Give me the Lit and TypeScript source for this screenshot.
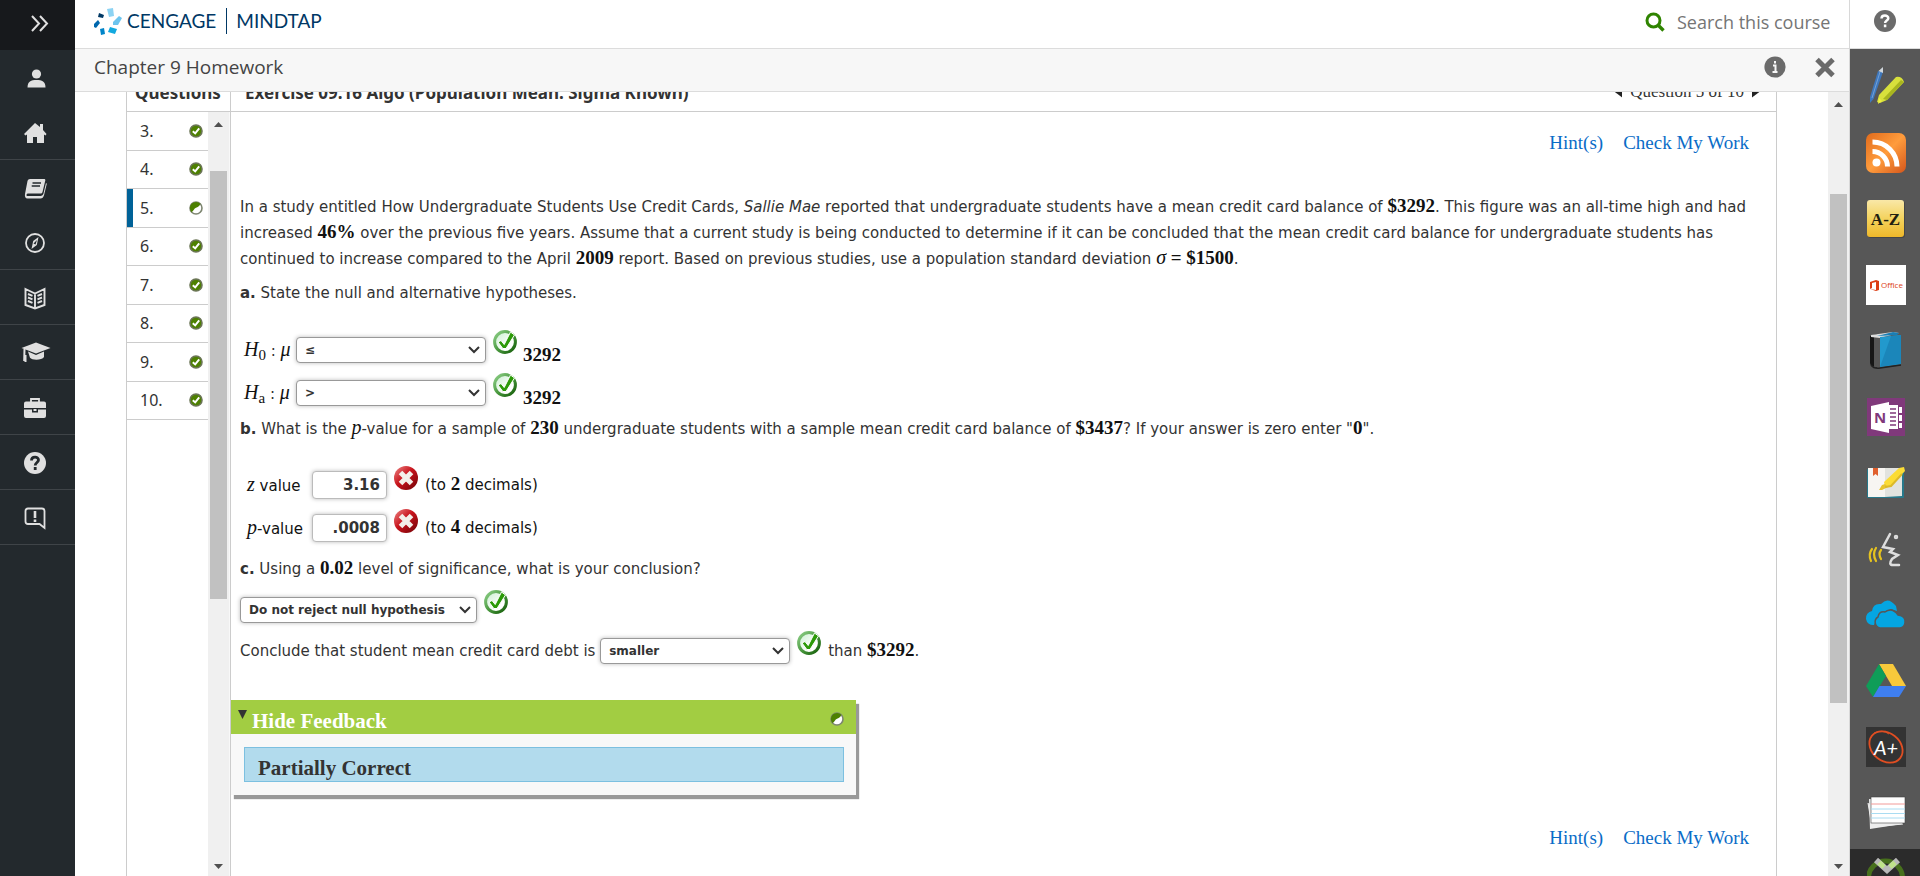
import { LitElement, html, css, svg, TemplateResult } from "lit";
import { customElement, property } from "lit/decorators.js";
import { classMap } from "lit/directives/class-map.js";

type Status = "full" | "partial";

const statusDot = (status: Status) => html`
  <svg class="dot" viewBox="0 0 14 14" role="img" aria-label=${status === "full" ? "Correct" : "Partially correct"}>
    <circle cx="7" cy="7" r="6" fill=${status === "full" ? "#4d8000" : "#fff"} stroke=${status === "full" ? "#6b7556" : "#7d8570"} stroke-width="1.6" />
    ${status === "full"
      ? svg`<path d="M3.800 7.200 6.200 9.400 10.200 4.400" fill="none" stroke="#fff" stroke-width="2" />`
      : svg`<path d="M2.600 11.200A6 6 0 0 1 11.400 2.800C10.400 5.600 8.600 6.200 7 6.800 5 7.600 4.800 9.600 2.600 11.200Z" fill="#4d8000" />`}
  </svg>
`;

const okMark = html`
  <svg class="mark" viewBox="0 0 24 24" role="img" aria-label="Correct">
    <defs>
      <linearGradient id="ring" x1="0" y1="0" x2="1" y2="1"><stop offset="0" stop-color="#8fd08a" /><stop offset="0.500" stop-color="#4b9a40" /><stop offset="1" stop-color="#145c08" /></linearGradient>
      <linearGradient id="disc" x1="0" y1="0" x2="1" y2="1"><stop offset="0" stop-color="#c9efcf" /><stop offset="0.700" stop-color="#fff" /></linearGradient>
    </defs>
    <circle cx="12" cy="12" r="10.400" fill="url(#disc)" stroke="url(#ring)" stroke-width="3" />
    <path d="M5 12 8 10.500 11.200 14.500 17.500 2 21.500 5 13 18.500 9.800 18.500Z" fill="#2c9a08" stroke="#fff" stroke-width="1" />
  </svg>
`;

const badMark = html`
  <svg class="mark" viewBox="0 0 24 24" role="img" aria-label="Incorrect">
    <defs>
      <linearGradient id="red" x1="0" y1="0" x2="1" y2="1"><stop offset="0" stop-color="#e88" /><stop offset="0.450" stop-color="#c8141c" /><stop offset="1" stop-color="#6e0206" /></linearGradient>
    </defs>
    <circle cx="12" cy="12" r="12" fill="url(#red)" />
    <path d="M6.500 6.500 17.500 17.500M17.500 6.500 6.500 17.500" stroke="#f3f0ea" stroke-width="5" stroke-linecap="butt" />
  </svg>
`;

const navIcons: Record<string, TemplateResult> = {
  profile: svg`<circle cx="12.500" cy="7" r="4.600" /><path d="M3.500 20.500c0-6 3.500-7.500 9-7.500s9 1.500 9 7.500z" />`,
  home: svg`<path d="M11 2 0 13l1.500 1.500L3 13.500V22h6v-6h4v6h7v-8.500l1.500 1 1-1.500L19 9V3h-3v3z" />`,
  book: svg`<path d="M6 2h14c1 0 1.500.500 1.300 1.500L18.500 15c-.300 1-1 1.500-2 1.500H4c-1.500 0-2 2-1 2.500h13.500c1.500 0 2.500-1 3-2.500L22 6l.800.800-2.800 11.400c-.500 2-1.800 3.300-3.500 3.300H3.500C1.500 21.500.500 19.500 1 17L3.500 4C3.800 2.700 4.800 2 6 2z" /><path d="M8.500 6H17M7.700 9H16" stroke="#23292d" stroke-width="1.500" />`,
  compass: svg`<circle cx="11" cy="12" r="9" fill="none" stroke="#e0e0e0" stroke-width="1.800" /><path d="M14.500 6 12.800 14 7.500 18 9.200 10z" /><path d="M13 9 9.500 12.500 11.500 13.500z" fill="#23292d" />`,
  reader: svg`<path d="M1.500 3 11 7.500 20.500 3v16L11 22.500 1.500 19zM11 7.500v15M4 8l4.500 1.800M4 11.500l4.500 1.800M4 15l4.500 1.800M18 8l-4.500 1.800M18 11.500l-4.500 1.800M18 15l-4.500 1.800" fill="none" stroke="#e0e0e0" stroke-width="1.900" />`,
  grades: svg`<path d="M12 1.500 26.500 7 12 12.500-2.500 7z" /><path d="M4 10.500 12 14l8-3.500v5.500c-2 3.500-12 3.500-14 .800z" /><path d="M.5 8 .2 20M1.500 14v7" stroke="#e0e0e0" stroke-width="2" />`,
  tools: svg`<path d="M8 6V3h8v3" fill="none" stroke="#e0e0e0" stroke-width="1.800" transform="translate(-1 0)" /><path d="M2 5.500h18q2 0 2 2V12H0V7.500q0-2 2-2zM0 13.500h8v3h6v-3h8V20q0 2-2 2H2q-2 0-2-2z" /><path d="M9.500 13h3v2h-3z" />`,
  help: svg`<circle cx="11" cy="12" r="11" /><path d="M7.500 9.500C7.500 5 14.500 5 14.500 9c0 2.500-3.300 2.500-3.300 5.500M11.200 16v3" fill="none" stroke="#23292d" stroke-width="2.800" />`,
  feedback: svg`<path d="M4 2.500h14q2.500 0 2.500 2.500v17l-5-4H4q-2.500 0-2.500-2.500V5Q1.500 2.500 4 2.500z" fill="none" stroke="#e0e0e0" stroke-width="1.800" /><path d="M11 5v7M11 13.500v2.500" stroke="#e0e0e0" stroke-width="2.600" />`,
};

@customElement("side-nav")
export class SideNav extends LitElement {
  static styles = css`
    :host { display: flex; flex-direction: column; width: 75px; flex: none; background: #23292d; }
    button { border: 0; padding: 0; background: none; font: inherit; display: flex; align-items: center; justify-content: center; flex: none; cursor: pointer; }
    .toggle { height: 50px; background: #17191c; }
    .group { display: flex; flex-direction: column; border-bottom: 1px solid #3f4448; }
    .pair { padding-top: 1px; }
    .group button { height: 54px; padding: 1px 5px 0 0; }
    svg { width: 24px; height: 24px; fill: #e0e0e0; overflow: visible; }
    .chevrons { fill: none; stroke: #e0e0e0; stroke-width: 2; margin: 0 0 4px 4px; }
  `;
  render() {
    const groups: [string, string][][] = [
      [["profile", "Profile"], ["home", "Home"]],
      [["book", "Book"], ["compass", "Explore"]],
      [["reader", "Reader"]], [["grades", "Grades"]], [["tools", "Tools"]], [["help", "Help"]], [["feedback", "Feedback"]],
    ];
    return html`
      <button class="toggle" aria-label="Expand navigation">
        <svg class="chevrons" viewBox="0 0 24 24"><path d="m4 5 7 7.500-7 7.500M12 5l7 7.500-7 7.500" /></svg>
      </button>
      ${groups.map((g) => html`<div class=${classMap({ group: true, pair: g.length > 1 })}>${g.map(([k, label]) => html`
        <button aria-label=${label}><svg viewBox="-1 0 24 24">${navIcons[k]}</svg></button>`)}</div>`)}
    `;
  }
}

const apps: { name: string; art: TemplateResult }[] = [
  { name: "Highlighter", art: svg`
    <path d="M12 4 17 5 7.500 32 4 36 4 30z" fill="#3f78bd" /><path d="M12.500 4 17 0v6z" fill="#cfd6dc" /><path d="M14 5 6 31" stroke="#75a2d6" />
    <path d="M30 10q6-1 8 5L21 33l-7 3-3-1 2-7z" fill="#d8e03c" /><path d="M38 15 21 33l-4-1 18-19z" fill="#a9b51f" /><path d="M13 31l3 3-4 3z" fill="#f0f040" />` },
  { name: "RSS feed", art: svg`
    <defs><linearGradient id="rss" x1="0" y1="0" x2="1" y2="1"><stop offset="0" stop-color="#e06a1c" /><stop offset="0.500" stop-color="#ff9c3c" /><stop offset="1" stop-color="#d4561c" /></linearGradient></defs>
    <rect width="40" height="40" rx="7" fill="url(#rss)" /><circle cx="10.500" cy="29.500" r="4" fill="#fff" />
    <path d="M6.500 18.500A15 15 0 0 1 21.500 33.500M6.500 9A24.500 24.500 0 0 1 31 33.500" fill="none" stroke="#fff" stroke-width="5" />` },
  { name: "Glossary", art: svg`
    <defs><linearGradient id="az" x1="0" y1="0" x2="0" y2="1"><stop offset="0" stop-color="#f9e8a8" /><stop offset="0.500" stop-color="#f4d35e" /><stop offset="1" stop-color="#efb82a" /></linearGradient></defs>
    <rect x="2" y="2" width="37" height="37" rx="3" fill="#3b3b3b" opacity="0.600" /><rect x="1" y="1" width="37" height="37" rx="3" fill="url(#az)" />
    <text x="19.500" y="26" text-anchor="middle" class="serif">A-Z</text>` },
  { name: "Office", art: svg`
    <rect width="40" height="40" fill="#fff" /><path d="M4 17 10 15l3 1v9l-3 1-6-2 6 1V17l-4 1v5l-2 1z" fill="#dc3e15" /><text x="15" y="23" class="office">Office</text>` },
  { name: "Dictionary", art: svg`
    <path d="M4 5 11 3v34l-5-2q-2-1-2-3z" fill="#161616" /><path d="M8 6h6v31l-6-1z" fill="#555" /><path d="M5 4 27 1l6 1-19 5-9-1z" fill="#ddd" /><path d="M27 1l6 1-2 2-20 1z" fill="#1a7eb4" />
    <path d="M14 6 35 4v29l-21 3z" fill="#2299cd" /><path d="M25 5 35 4v29l-21 3z" fill="#1b86ba" /><path d="M5 34q3 4 9 3l21-3" fill="none" stroke="#222" stroke-width="1.500" />` },
  { name: "OneNote", art: svg`
    <rect x="1" y="1" width="38" height="38" fill="#80397b" /><path d="M22 8h10v24H22z" fill="#fff" /><path d="M33 10h3v6h-3zM33 18h3v6h-3zM33 26h3v5h-3z" fill="#fff" />
    <path d="M24 12h6M24 16h6M24 20h6M24 24h6M24 28h6" stroke="#80397b" stroke-width="1.500" /><path d="M5 9 23 5v31L5 32z" fill="#fff" /><text x="14" y="26" text-anchor="middle" class="note">N</text>` },
  { name: "Notebook", art: svg`
    <rect x="1" y="6" width="37" height="29" rx="1" fill="#27788a" /><path d="M2 5h17v29H2z" fill="#f7f5f2" /><path d="M19 5h17v28l-17 1z" fill="#e2e3df" />
    <path d="M7 5h5v8l-2.500-2L7 13z" fill="#e0602e" /><path d="M33 5 38 4 39 8 25 23l-6 1-1-5z" fill="#fbdc35" /><path d="m16 22 3-1 3 3-6 3h-3z" fill="#e7c42e" /><path d="m36 11-11 12-6 1" fill="none" stroke="#dcb928" stroke-width="2" />` },
  { name: "Read aloud", art: svg`
    <g fill="none" stroke-linecap="round" transform="translate(0 1)">
    <path d="M24 4 17 17l10 2-3 3 8 3-6 4q-4 6 1 6h6" stroke="#dedede" stroke-width="2.500" /><circle cx="30" cy="7" r="1" stroke="#dedede" stroke-width="2.500" />
    <path d="M15 20q-3 4 0 9M10 18q-4 6 0 13M6 19q-4 5-1 12" stroke="#e6c31f" stroke-width="2.200" /></g>` },
  { name: "OneDrive", art: svg`
    <path d="M8 30a7 7 0 0 1-2-14q1-8 9-7 7-8 15 2l1 5-6-2-8 3-6 6z" fill="#04a6e2" />
    <path d="M14 33a6 6 0 0 1-2-11q1-6 7-5 7-5 13 3 8 1 7 8-1 5-5 5z" fill="#04a6e2" stroke="#575757" stroke-width="1.500" />` },
  { name: "Google Drive", art: svg`
    <path d="M13 3h14l13 22H26z" fill="#f8c93b" /><path d="M13 3 20 15 7 36 0 25z" fill="#0f9d58" /><path d="M13.500 25H40l-7 11H7z" fill="#3f7ff0" />` },
  { name: "Gradebook", art: svg`
    <rect width="40" height="40" fill="#333" /><ellipse cx="20" cy="20" rx="18" ry="14" transform="rotate(38 20 20)" fill="none" stroke="#e04e22" stroke-width="1.800" /><path d="M8 6q8-4 15 1" fill="none" stroke="#e04e22" />
    <text x="20" y="28" text-anchor="middle" class="grade">A+</text>` },
  { name: "Flashcards", art: svg`
    <path d="M2 10 6 34l31-3" fill="#ddd" stroke="#eee" /><path d="M3 6 4 36 36 31V8z" fill="#eee" /><rect x="5" y="4" width="34" height="26" fill="#fff" stroke="#444" stroke-width="0.600" />
    <path d="M5 11h34" stroke="#f29a98" /><path d="M5 16h34M5 20.500h34M5 25h34" stroke="#a9dcf2" />` },
];

@customElement("app-rail")
export class AppRail extends LitElement {
  static styles = css`
    :host { display: flex; flex-direction: column; width: 70px; flex: none; background: #575757; position: relative; overflow: hidden; }
    button { border: 0; padding: 0; background: none; display: flex; cursor: pointer; }
    .help { height: 49px; flex: none; background: #fff; border-bottom: 1px solid #dcdcdc; justify-content: center; align-items: center; padding-bottom: 6px; box-sizing: border-box; }
    .help svg { width: 22px; height: 22px; }
    .apps { display: flex; flex-direction: column; align-items: center; gap: 26px; padding: 18px 0 18px 2px; }
    .apps svg { width: 40px; height: 40px; overflow: visible; }
    .serif { font: bold 17px "Liberation Serif", serif; fill: #222010; }
    .office { font: 8px "Open Sans", sans-serif; fill: #dc3e15; }
    .note { font: bold 15px "Open Sans", sans-serif; fill: #80397b; }
    .grade { font: italic 20px Lato, sans-serif; fill: #fff; }
    .more { position: absolute; left: 0; right: 0; bottom: 0; height: 27px; background: #2b2b2b; justify-content: center; overflow: hidden; padding-left: 4px; }
    .more svg { width: 40px; height: 40px; margin-top: 9px; flex: none; }
  `;
  render() {
    return html`
      <button class="help" aria-label="Help">
        <svg viewBox="0 0 22 22"><circle cx="11" cy="11" r="11" fill="#6b6b6b" /><path d="M7.500 8.500C7.500 4.500 14.300 4.500 14.300 8.300c0 2.300-3.200 2.200-3.200 4.700M11.100 14.500v2.800" fill="none" stroke="#fff" stroke-width="2.500" /></svg>
      </button>
      <div class="apps">${apps.map((a) => html`<button aria-label=${a.name}><svg viewBox="0 0 40 40">${a.art}</svg></button>`)}</div>
      <button class="more" aria-label="More apps">
        <svg viewBox="0 0 40 40"><circle cx="18.500" cy="20" r="17" fill="none" stroke="#47701c" stroke-width="5" /><path d="m9 2 11 10L31 2" fill="none" stroke="#b9b9b9" stroke-width="6" /><path d="M12 4.500l5 4.500M28 4.500l-5 4.500" stroke="#bfe38a" stroke-width="5" /></svg>
      </button>
    `;
  }
}

@customElement("scroll-strip")
export class ScrollStrip extends LitElement {
  @property({ type: Number }) before = 20;
  @property({ type: Number }) size = 50;
  static styles = css`
    :host { display: flex; flex-direction: column; align-items: center; width: 21px; flex: none; background: #f0f0f0; }
    .arrow { width: 9px; height: 5px; margin: 10px 0; flex: none; background: #505050; clip-path: polygon(50% 0, 100% 100%, 0 100%); }
    .down { clip-path: polygon(0 0, 100% 0, 50% 100%); margin: 7px 0; }
    .track { flex: 1; width: 17px; display: flex; flex-direction: column; }
    .thumb { background: #c1c1c1; }
  `;
  render() {
    return html`
      <div class="arrow"></div>
      <div class="track"><div style="flex: ${this.before}"></div><div class="thumb" style="flex: ${this.size}"></div><div style="flex: ${100 - this.before - this.size}"></div></div>
      <div class="arrow down"></div>
    `;
  }
}

@customElement("question-list")
export class QuestionList extends LitElement {
  static styles = css`
    :host { display: flex; min-height: 0; }
    ul { list-style: none; margin: 0; padding: 0; flex: 1; display: flex; flex-direction: column; height: 308px; font: 16px/20px "Noto Sans", sans-serif; }
    li { flex: 1; display: flex; border-bottom: 1px solid #ccc; }
    a { flex: 1; display: flex; align-items: center; justify-content: space-between; padding: 0 5px 0 7px; border-left: 6px solid transparent; color: #333; text-decoration: none; }
    .current a { border-left-color: #006298; }
    .dot { width: 14px; height: 14px; }
    scroll-strip { border-right: 1px solid #f8f8f8; }
  `;
  render() {
    return html`
      <ul>${[3, 4, 5, 6, 7, 8, 9, 10].map((n) => html`
        <li class=${classMap({ current: n === 5 })}><a href="#q${n}"><span>${n}.</span>${statusDot(n === 5 ? "partial" : "full")}</a></li>`)}
      </ul>
      <scroll-strip .before=${4.7} .size=${59.5}></scroll-strip>
    `;
  }
}

@customElement("exercise-body")
export class ExerciseBody extends LitElement {
  static styles = css`
    :host { display: flex; flex-direction: column; align-items: flex-start; color: #333; font: 15px/26px "DejaVu Sans", Verdana, sans-serif; }
    .links { align-self: flex-end; display: flex; gap: 20px; padding: 18px 27px; font: 19px/26px "Liberation Serif", Georgia, serif; }
    a { color: #0a6cc7; text-decoration: none; }
    .prose { padding: 0 16px 0 9px; }
    .intro { padding-top: 20px; }
    p { margin: 0 0 8px; }
    .math { font: bold 19px/20px "Liberation Serif", serif; color: #111; }
    .var { font: italic 20px/20px "Liberation Serif", serif; color: #111; }
    sub { font: 15px/10px "Liberation Serif", serif; color: #111; vertical-align: -4px; }
    .flat { margin: 0; }
    .rows { display: grid; grid-auto-rows: 43px; }
    .hyp { padding: 24px 0 0 13px; }
    .val { padding: 24px 0 4px 16px; color: #111; }
    .row { display: flex; align-items: flex-start; }
    .hyp label { width: 52px; padding-top: 8px; white-space: nowrap; }
    .hyp .math { padding: 15px 0 0 6px; }
    .val label { width: 65px; padding-top: 7px; white-space: nowrap; }
    .val .unit { padding: 6px 0 0 7px; }
    select, input { box-sizing: border-box; border: 1px solid #999; border-radius: 4px; background-color: #fff; color: #333; box-shadow: 0 0 4px #bbb; margin: 0; }
    select { appearance: none; height: 26px; margin-top: 7px; padding: 0 20px 0 8px; font: bold 12px/22px "DejaVu Sans", Verdana, sans-serif;
      background-image: url("data:image/svg+xml,%3Csvg xmlns='http://www.w3.org/2000/svg' width='12' height='8'%3E%3Cpath d='M1 1l5 5 5-5' fill='none' stroke='%23333' stroke-width='2'/%3E%3C/svg%3E"); background-repeat: no-repeat; background-position: right 5px center; }
    .wide { width: 190px; }
    .verdict { width: 237px; }
    input { width: 75px; height: 28px; margin-top: 5px; padding: 0 6px; text-align: right; font: bold 15px/20px "DejaVu Sans", Verdana, sans-serif; border-color: #bbb; }
    .mark { width: 24px; height: 24px; margin-left: 7px; flex: none; }
    .answer { padding: 8px 0 0 9px; }
    .answer .text { padding-top: 7px; white-space: pre; }
    .answer .than { padding-left: 7px; }
    .card { align-self: stretch; max-width: 625px; margin-top: 36px; background: #f8f8f8; box-shadow: 3px 4px 1px #999; }
    .bar { display: flex; align-items: center; gap: 5px; width: 100%; height: 34px; padding: 0 12px 0 7px; border: 0; background: #a2cd42; color: #fff; font: bold 21px/26px "Liberation Serif", Georgia, serif; text-align: left; cursor: pointer; }
    .bar span { flex: 1; padding-top: 8px; }
    .bar .dot { width: 14px; height: 14px; padding-top: 4px; }
    .bar .tri { width: 9px; height: 9px; margin-bottom: 5px; }
    .result { margin: 13px 12px 0 13px; padding: 7px 13px 0; height: 26px; border: 1px solid #7cc0e0; background: #b2dbed; font: bold 21px/26px "Liberation Serif", Georgia, serif; }
    .foot { height: 13px; }
    .last { padding-top: 30px; }
  `;
  private m(t: string) { return html`<span class="math">${t}</span>`; }
  private v(t: string) { return html`<span class="var">${t}</span>`; }
  private links(cls: string) {
    return html`<div class="links ${cls}"><a href="#hints">Hint(s)</a><a href="#check">Check My Work</a></div>`;
  }
  render() {
    return html`
      ${this.links("")}
      <div class="prose intro">
        <p>In a study entitled How Undergraduate Students Use Credit Cards, <em>Sallie Mae</em> reported that undergraduate students have a mean credit card balance of ${this.m("$3292")}. This figure was an all-time high and had increased ${this.m("46%")} over the previous five years. Assume that a current study is being conducted to determine if it can be concluded that the mean credit card balance for undergraduate students has continued to increase compared to the April ${this.m("2009")} report. Based on previous studies, use a population standard deviation ${this.v("σ")} <span class="math">= $1500</span>.</p>
        <p class="flat"><b>a.</b> State the null and alternative hypotheses.</p>
      </div>
      <div class="rows hyp">
        <div class="row"><label for="h0">${this.v("H")}<sub>0</sub> : ${this.v("μ")}</label><select id="h0" class="wide"><option>≤</option></select>${okMark}${this.m("3292")}</div>
        <div class="row"><label for="ha">${this.v("H")}<sub>a</sub> : ${this.v("μ")}</label><select id="ha" class="wide"><option>&gt;</option></select>${okMark}${this.m("3292")}</div>
      </div>
      <div class="prose"><b>b.</b> What is the ${this.v("p")}-value for a sample of ${this.m("230")} undergraduate students with a sample mean credit card balance of ${this.m("$3437")}? If your answer is zero enter "${this.m("0")}".</div>
      <div class="rows val">
        <div class="row"><label for="z">${this.v("z")} value</label><input id="z" value="3.16">${badMark}<span class="unit">(to ${this.m("2")} decimals)</span></div>
        <div class="row"><label for="p">${this.v("p")}-value</label><input id="p" value=".0008">${badMark}<span class="unit">(to ${this.m("4")} decimals)</span></div>
      </div>
      <div class="prose"><b>c.</b> Using a ${this.m("0.02")} level of significance, what is your conclusion?</div>
      <div class="row answer"><select class="verdict" aria-label="Conclusion"><option>Do not reject null hypothesis</option></select>${okMark}</div>
      <div class="row answer"><label class="text" for="cmp">Conclude that student mean credit card debt is </label><select id="cmp" class="wide"><option>smaller</option></select>${okMark}<span class="text than">than ${this.m("$3292")}.</span></div>
      <section class="card">
        <button class="bar" aria-expanded="true"><svg class="tri" viewBox="0 0 9 9"><path d="M0 0h9L4.500 9z" fill="#333" /></svg><span>Hide Feedback</span>${statusDot("partial")}</button>
        <div class="result">Partially Correct</div>
        <div class="foot"></div>
      </section>
      ${this.links("last")}
    `;
  }
}

@customElement("app-root")
export class AppRoot extends LitElement {
  static styles = css`
    :host { display: flex; height: 100vh; overflow: hidden; background: #fff; }
    .center { flex: 1; min-width: 0; display: flex; flex-direction: column; border-right: 1px solid #d8d8d8; }
    .top { height: 48px; flex: none; display: flex; align-items: center; justify-content: space-between; padding: 0 18px; border-bottom: 1px solid #dcdcdc; }
    .brand { display: flex; align-items: center; font: 19px/26px Lato, sans-serif; color: #003865; padding-bottom: 6px; }
    .brand svg { width: 29px; height: 29px; margin-right: 5px; }
    .brand .product { margin-left: 10px; padding-left: 9px; border-left: 1px solid #003865; }
    .search { display: flex; align-items: center; gap: 12px; padding-bottom: 4px; }
    .search svg { width: 20px; height: 20px; }
    .search input { width: 154px; border: 0; padding: 0; outline: 0; background: none; font: 18px/26px "Open Sans", sans-serif; color: #757575; }
    .search input::placeholder { color: #757575; opacity: 1; }
    .sub { height: 42px; flex: none; display: flex; align-items: center; padding: 0 13px 0 19px; background: #f7f7f7; border-bottom: 1px solid #dcdcdc; }
    h1 { margin: 0; flex: 1; font: 19px/26px "Open Sans", sans-serif; color: #444; padding-bottom: 6px; }
    .tool { border: 0; background: none; padding: 0 0 6px; display: flex; margin-left: 28px; }
    .tool svg { width: 22px; height: 22px; }
    .stage { flex: 1; min-height: 0; display: flex; }
    .scroller { flex: 1; min-width: 0; overflow: hidden; padding: 0 51px; display: flex; }
    .sheet { flex: 1; min-width: 0; display: grid; grid-template-columns: 104px minmax(0, 1fr); grid-template-rows: 41px minmax(0, 1fr); margin-top: -21px; border: solid #ccc; border-width: 0 1px; }
    .head { display: flex; align-items: center; justify-content: space-between; border-bottom: 1px solid #ccc; font: bold 17px/24px "Noto Sans", sans-serif; color: #333; padding: 3px 16px 0 14px; }
    .head h2 { margin: 0; font: inherit; white-space: nowrap; }
    .head.qs { padding: 3px 0 0 8px; border-right: 1px solid #ccc; }
    .side { border-right: 1px solid #ccc; }
    .pager { display: flex; align-items: center; gap: 8px; font: 17px/20px "Liberation Serif", serif; padding-bottom: 2px; }
    .pager a { width: 8px; height: 12px; background: #222; clip-path: polygon(0 50%, 100% 0, 100% 100%); }
    .pager .next { clip-path: polygon(0 0, 100% 50%, 0 100%); }
    .main { min-width: 0; }
  `;
  render() {
    return html`
      <side-nav></side-nav>
      <div class="center">
        <header class="top">
          <div class="brand">
            <svg viewBox="0 0 29 29"><path d="m14 2 6-1 1 8-5 1z" fill="#8dd3f3" /><path d="m20 15 6-6 3 2-4 7-5 0z" fill="#6cc4ee" /><path d="m17 20 7 2-2 5-7-2z" fill="#12a9df" /><path d="m7 22 4-1 1 6-4 1z" fill="#0084c9" /><path d="m1 17 4-4 2 3-4 5-2-1z" fill="#0067ad" /><path d="m6 6 5 2-1 3-5-1z" fill="#003865" /></svg>
            <span>CENGAGE</span><span class="product">MINDTAP</span>
          </div>
          <label class="search">
            <svg viewBox="0 0 20 20"><circle cx="8.500" cy="8.500" r="6.500" fill="none" stroke="#2f8400" stroke-width="3" /><path d="m13 13 5.500 5.500" stroke="#2f8400" stroke-width="3.400" /></svg>
            <input type="text" placeholder="Search this course" aria-label="Search this course">
          </label>
        </header>
        <div class="sub">
          <h1>Chapter 9 Homework</h1>
          <button class="tool" aria-label="Information"><svg viewBox="0 0 22 22"><circle cx="11" cy="11" r="10.600" fill="#6b6b6b" /><path d="M11 5v2.500M9 9.500h2.500V16M8.500 16h5" fill="none" stroke="#f7f7f7" stroke-width="2" /></svg></button>
          <button class="tool" aria-label="Close"><svg viewBox="0 0 22 22"><path d="m3 3.500 16 16M19 3.500l-16 16" stroke="#6b6b6b" stroke-width="5" /></svg></button>
        </div>
        <div class="stage">
          <div class="scroller">
            <div class="sheet">
              <div class="head qs"><h2>Questions</h2></div>
              <div class="head"><h2>Exercise 09.16 Algo (Population Mean: Sigma Known)</h2>
                <nav class="pager"><a href="#prev" aria-label="Previous"></a><span>Question 5 of 10</span><a class="next" href="#next" aria-label="Next"></a></nav>
              </div>
              <question-list class="side"></question-list>
              <exercise-body class="main"></exercise-body>
            </div>
          </div>
          <scroll-strip .before=${10.4} .size=${68.8}></scroll-strip>
        </div>
      </div>
      <app-rail></app-rail>
    `;
  }
}
